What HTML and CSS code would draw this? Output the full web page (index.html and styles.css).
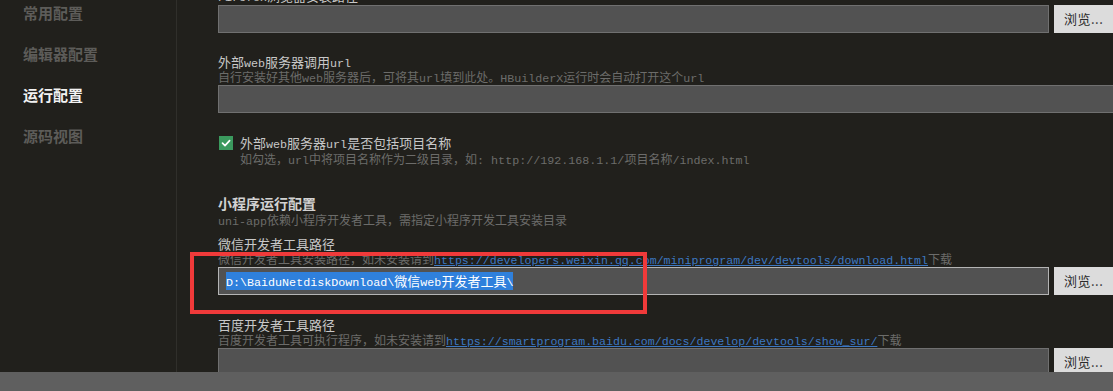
FILE: index.html
```html
<!DOCTYPE html>
<html lang="zh-CN">
<head>
<meta charset="utf-8">
<title>运行配置</title>
<link rel="stylesheet" href="styles.css">
</head>
<body>
<div class="app">
  <div class="main">
    <nav class="sidebar">
      <div class="nav-item">常用配置</div>
      <div class="nav-item">编辑器配置</div>
      <div class="nav-item active">运行配置</div>
      <div class="nav-item">源码视图</div>
    </nav>
    <section class="content">
      <div class="panel">
        <div class="field">
          <div class="label"><span class="m">Firefox</span>浏览器安装路径</div>
          <div class="row"><div class="input"></div><button class="browse">浏览...</button></div>
        </div>

        <div class="field g-web">
          <div class="label">外部<span class="m">web</span>服务器调用<span class="m">url</span></div>
          <div class="desc">自行安装好其他<span class="m">web</span>服务器后，可将其<span class="m">url</span>填到此处。<span class="m">HBuilderX</span>运行时会自动打开这个<span class="m">url</span></div>
          <div class="row"><div class="input"></div></div>
        </div>

        <div class="check-field">
          <div class="check-row">
            <span class="checkbox"><svg width="14" height="14" viewBox="0 0 14 14"><polyline points="3.5,7.2 6,9.6 10.6,4.6" fill="none" stroke="#ffffff" stroke-width="1.7" stroke-linecap="round" stroke-linejoin="round"/></svg></span>
            <span class="label">外部<span class="m">web</span>服务器<span class="m">url</span>是否包括项目名称</span>
          </div>
          <div class="desc indent">如勾选，<span class="m">url</span>中将项目名称作为二级目录，如<span class="m">: http://192.168.1.1/</span>项目名称<span class="m">/index.html</span></div>
        </div>

        <div class="section">
          <div class="heading">小程序运行配置</div>
          <div class="desc"><span class="m">uni-app</span>依赖小程序开发者工具，需指定小程序开发工具安装目录</div>
        </div>

        <div class="field g-wx">
          <div class="label">微信开发者工具路径</div>
          <div class="desc">微信开发者工具安装路径，如未安装请到<span class="link">https://developers.weixin.qq.com/miniprogram/dev/devtools/download.html</span>下载</div>
          <div class="row"><div class="input focused"><span class="sel"><span class="m">D:\BaiduNetdiskDownload\</span>微信<span class="m">web</span>开发者工具<span class="m">\</span></span></div><button class="browse">浏览...</button></div>
        </div>

        <div class="field g-bd">
          <div class="label">百度开发者工具路径</div>
          <div class="desc">百度开发者工具可执行程序，如未安装请到<span class="link">https://smartprogram.baidu.com/docs/develop/devtools/show_sur/</span>下载</div>
          <div class="row"><div class="input"></div><button class="browse">浏览...</button></div>
        </div>
      </div>
    </section>
  </div>
  <div class="hscroll"></div>
  <div class="annot"></div>
</div>
</body>
</html>
```

FILE: styles.css
```css
html, body {
  margin: 0;
  padding: 0;
}

body {
  width: 1113px;
  height: 391px;
  overflow: hidden;
  background: #21201c;
  font-family: "Noto Sans CJK SC", "Noto Sans", sans-serif;
}

.app {
  position: relative;
  height: 391px;
  display: flex;
  flex-direction: column;
}

.main {
  display: flex;
  height: 372px;
  overflow: hidden;
}

.sidebar {
  width: 177px;
  flex: none;
  box-sizing: border-box;
  border-right: 1px solid #302f2b;
  padding: 3px 0 0 23px;
  display: flex;
  flex-direction: column;
  gap: 21px;
}

.nav-item {
  font-size: 15px;
  font-weight: 700;
  line-height: 20px;
  height: 20px;
  color: #5d5c59;
  white-space: nowrap;
}

.nav-item.active {
  color: #f2f2f2;
}

.content {
  flex: 1;
  overflow: hidden;
  padding-left: 41px;
}

.panel {
  width: 907px;
  margin-top: -12px;
}

.label {
  display: block;
  font-size: 13px;
  line-height: 16px;
  height: 16px;
  color: #c8c8c8;
  white-space: nowrap;
}

.desc {
  font-size: 12px;
  line-height: 14px;
  height: 14px;
  color: #6c6c6a;
  white-space: nowrap;
}

.m {
  font-family: "Liberation Mono", monospace;
  font-size: 11.7px;
  line-height: 1;
}

.link {
  font-family: "Liberation Mono", monospace;
  font-size: 11.6px;
  line-height: 1;
  color: #3d78c2;
  text-decoration: underline;
}

.row {
  display: flex;
  gap: 5px;
  height: 28px;
  margin-top: 1px;
}

.input {
  flex: 1;
  box-sizing: border-box;
  height: 28px;
  background: #525252;
  border: 1px solid #707070;
  padding: 4px 7px;
  line-height: 18px;
  font-size: 13px;
  white-space: nowrap;
  overflow: hidden;
}

.input.focused {
  border-color: #b4b4b4;
}

.sel {
  display: inline-block;
  vertical-align: top;
  background: #2f80dc;
  color: #ffffff;
  line-height: 18px;
  height: 18px;
}

.browse {
  width: 71px;
  height: 28px;
  flex: none;
  border: 0;
  margin: 0;
  background: #dcdcdc;
  color: #2b2b2b;
  font-family: "Noto Sans CJK SC", sans-serif;
  font-size: 13px;
  line-height: 28px;
  text-align: left;
  padding: 0 0 0 10px;
  letter-spacing: 0.5px;
}

.g-web {
  margin-top: 21px;
}

.check-field {
  margin-top: 22px;
}

.check-row {
  display: flex;
  align-items: center;
  height: 16px;
  gap: 7px;
}

.checkbox {
  width: 14px;
  height: 14px;
  margin-left: 1px;
  background: #3b9a5e;
  display: flex;
}

.indent {
  padding-left: 22px;
  margin-top: 1px;
}

.section {
  margin-top: 27px;
}

.heading {
  font-size: 14px;
  font-weight: 700;
  line-height: 20px;
  height: 20px;
  color: #d2d2d2;
}

.g-wx {
  margin-top: 9px;
}

.g-bd {
  margin-top: 22px;
}

.hscroll {
  height: 19px;
  background: #5f5f5f;
}

.annot {
  position: absolute;
  left: 190px;
  top: 252px;
  width: 457px;
  height: 62px;
  box-sizing: border-box;
  border: 4px solid #f03a3a;
  pointer-events: none;
}
```
